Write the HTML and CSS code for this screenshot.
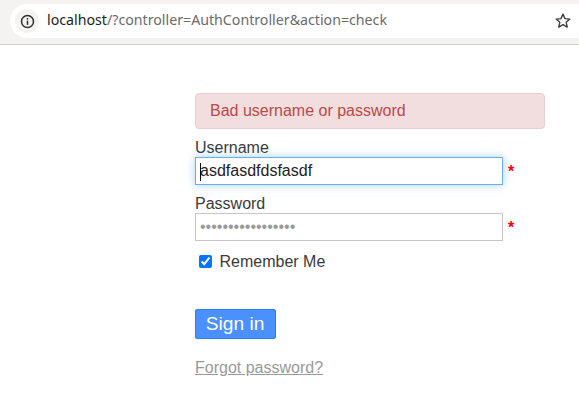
FILE: index.html
```html
<!DOCTYPE html>
<html lang="en">
<head>
<meta charset="utf-8">
<title>Login</title>
<link rel="stylesheet" href="styles.css">
</head>
<body>
<header class="toolbar">
  <div class="omnibox">
    <span class="site-info">
      <svg width="15" height="15" viewBox="0 0 14 14" aria-hidden="true"><circle cx="7" cy="7" r="5.6" fill="none" stroke="#2f2f2f" stroke-width="1.4"/><rect x="6.3" y="6.2" width="1.4" height="4" fill="#2f2f2f"/><rect x="6.3" y="3.8" width="1.4" height="1.4" fill="#2f2f2f"/></svg>
    </span>
    <span class="url"><span class="host">localhost</span>/?controller=AuthController&amp;action=check</span>
    <svg class="star" width="18" height="18" viewBox="0 0 16 16" aria-hidden="true"><path d="M8 1.9l1.8 4 4.3.4-3.3 2.9 1 4.3L8 11.2l-3.8 2.3 1-4.3-3.3-2.9 4.3-.4z" fill="none" stroke="#3c3c3c" stroke-width="1.2" stroke-linejoin="round"/></svg>
  </div>
</header>
<main class="login">
  <div class="alert">Bad username or password</div>
  <form class="form">
    <label class="label" for="username">Username</label>
    <div class="field">
      <div class="input input-focus" id="username"><span class="caret"></span>asdfasdfdsfasdf</div>
      <span class="req">*</span>
    </div>
    <label class="label label-next" for="password">Password</label>
    <div class="field">
      <div class="input dots" id="password">•••••••••••••••••</div>
      <span class="req">*</span>
    </div>
    <label class="remember"><input type="checkbox" checked class="check"> Remember Me</label>
    <button type="button" class="btn">Sign in</button>
    <a class="forgot" href="#">Forgot password?</a>
  </form>
</main>
</body>
</html>
```
FILE: styles.css
```css
html, body { margin: 0; padding: 0; height: 100%; overflow: hidden; background: #fff; }
body { font-family: "Liberation Sans", Arial, sans-serif; font-size: 16px; color: #3a3a3a; }
.toolbar { height: 45px; box-sizing: border-box; background: #f5f3f1; border-bottom: 1px solid #d2cdc8; padding: 4px 0 0 10px; }
.omnibox { height: 34px; background: #fff; border-radius: 17px 0 0 17px; display: flex; align-items: center; padding-left: 5px; }
.site-info { width: 24px; height: 24px; border-radius: 50%; background: #f5f3f1; display: flex; align-items: center; justify-content: center; flex: none; }
.url { font-family: "Noto Sans", "Open Sans", sans-serif; font-size: 14.2px; line-height: 32px; align-self: flex-start; color: #6b6b6b; margin-left: 8px; white-space: nowrap; flex: 1; }
.host { color: #222; }
.star { flex: none; margin-right: 7px; margin-top: -1px; }
.login { margin: 48px 0 0 195px; width: 350px; }
.alert { height: 36px; box-sizing: border-box; background: #f2dede; border: 1px solid #ebcccc; border-radius: 4px; color: #b94a48; padding: 0 14px; line-height: 34px; }
.form { display: flex; flex-direction: column; align-items: flex-start; }
.label { display: block; line-height: 18px; margin-top: 10px; }
.label-next { margin-top: 10px; }
.field { display: flex; align-items: center; }
.input { width: 308px; height: 28px; box-sizing: border-box; border: 1px solid #c6c6c6; background: #fff; line-height: 26px; padding-left: 4px; color: #222; position: relative; }
.input-focus { border-color: #66afe9; box-shadow: 0 0 8px rgba(102,175,233,.6); }
.caret { position: absolute; left: 4px; top: 5px; width: 1px; height: 18px; background: #000; }
.dots { color: #9a9a9a; }
.req { color: #f00; margin-left: 5px; padding-top: 2px; line-height: 26px; font-weight: bold; font-size: 16px; }
.remember { display: flex; align-items: center; margin: 11px 0 0 4px; height: 20px; gap: 7.5px; }
.check { margin: 0; width: 13px; height: 13px; accent-color: #0075ff; position: relative; top: -1px; }
.btn { margin-top: 37px; width: 81px; height: 30px; border: 1px solid #357ee8; border-radius: 2px; background: #4a90ff; color: #fff; font: 19.2px "Liberation Sans", Arial, sans-serif; padding: 0 1px 0 0; }
.forgot { margin-top: 19px; color: #999; line-height: 20px; }
```
